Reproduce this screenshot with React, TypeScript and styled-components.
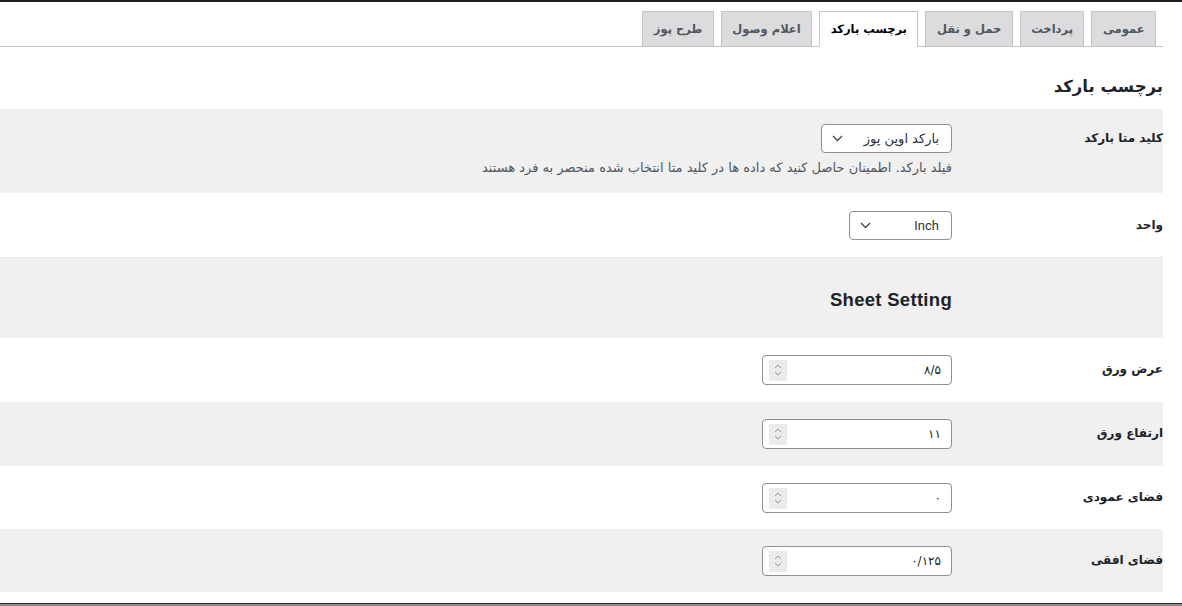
import React from "react";
import styled, { createGlobalStyle } from "styled-components";

const Global = createGlobalStyle`
  html, body { margin: 0; padding: 0; background: #ffffff; }
  body { font-family: "DejaVu Sans", "Noto Sans", sans-serif; color: #1d2327; }
  * { box-sizing: border-box; }
`;

const Page = styled.div`
  direction: rtl;
  width: 1182px;
  height: 606px;
  display: flex;
  flex-direction: column;
  overflow: hidden;
`;

const TopBar = styled.div`
  height: 2px;
  background: #1d1d1d;
  flex: none;
`;

const Content = styled.div`
  margin-right: 19px;
  display: flex;
  flex-direction: column;
  flex: 1;
`;

const TabBar = styled.nav`
  display: flex;
  gap: 7px;
  padding-top: 9px;
  padding-right: 7px;
  border-bottom: 1px solid #c3c4c7;
  height: 45px;
  align-items: flex-end;
`;

const Tab = styled.div<{ $active?: boolean }>`
  height: 36px;
  margin-bottom: -1px;
  padding: 0 10.5px;
  display: flex;
  align-items: center;
  font-size: 11.5px;
  font-weight: 700;
  color: ${(p) => (p.$active ? "#000" : "#50575e")};
  background: ${(p) => (p.$active ? "#ffffff" : "#dcdcde")};
  border: 1px solid #c3c4c7;
  border-bottom-color: ${(p) => (p.$active ? "#ffffff" : "#c3c4c7")};
  white-space: nowrap;
`;

const Title = styled.h2`
  margin: 0;
  height: 62px;
  display: flex;
  align-items: center;
  padding-top: 16px;
  font-size: 16.5px;
  font-weight: 700;
  color: #1d2327;
`;

const Row = styled.div<{ $shade?: boolean; $top?: number; $bottom?: number }>`
  display: grid;
  grid-template-columns: 211px 1fr;
  align-items: start;
  background: ${(p) => (p.$shade ? "#f0f0f0" : "#ffffff")};
  padding: ${(p) => p.$top ?? 17}px 0 ${(p) => p.$bottom ?? 17}px;
`;

const Label = styled.div`
  font-size: 12px;
  font-weight: 700;
  color: #1d2327;
  line-height: 28px;
  white-space: nowrap;
`;

const Cell = styled.div`
  display: flex;
  flex-direction: column;
  align-items: flex-start;
`;

const Select = styled.div<{ $w: number }>`
  width: ${(p) => p.$w}px;
  height: 29px;
  border: 1px solid #8c8f94;
  border-radius: 4px;
  background: #fff;
  display: flex;
  align-items: center;
  justify-content: space-between;
  padding: 0 12px 0 10px;
  font-size: 13px;
  color: #2c3338;
`;

const LatinText = styled.span`
  font-family: "Roboto", "Liberation Sans", sans-serif;
  font-size: 13px;
`;

const Desc = styled.p`
  margin: 5px 0 0;
  font-size: 13px;
  line-height: 20px;
  color: #50575e;
  white-space: nowrap;
`;

const Section = styled.div`
  display: grid;
  grid-template-columns: 211px 1fr;
  background: #f0f0f0;
  border-top: 1px solid #e8e8e8;
  height: 81px;
  align-items: center;
`;

const SectionTitle = styled.h3`
  grid-column: 2;
  margin: 4px 0 0;
  font-family: "Liberation Sans", "Roboto", sans-serif;
  font-size: 18.5px;
  font-weight: 700;
  color: #1d2327;
  letter-spacing: 0.3px;
`;

const NumberBox = styled.div`
  width: 190px;
  height: 30px;
  border: 1px solid #8c8f94;
  border-radius: 4px;
  background: #fff;
  display: flex;
  align-items: center;
  justify-content: space-between;
  padding: 0 10px 0 6px;
  font-size: 12px;
  color: #1d2327;
`;

const Spinner = styled.span`
  width: 18px;
  height: 21px;
  background: #ebebeb;
  display: flex;
  align-items: center;
  justify-content: center;
`;

const BottomLine = styled.div`
  height: 3px;
  border-top: 1px solid #2a2a2a;
  background: #8a8a8a;
  flex: none;
`;

const Chevron = () => (
  <svg width="11" height="7" viewBox="0 0 11 7" fill="none">
    <path d="M1 1l4.5 4.5L10 1" stroke="#3c434a" strokeWidth="1.3" />
  </svg>
);

const Spin = () => (
  <Spinner>
    <svg width="10" height="16" viewBox="0 0 10 16" fill="none">
      <path d="M2 6l3-3 3 3" stroke="#9a9a9a" strokeWidth="1" />
      <path d="M2 10l3 3 3-3" stroke="#9a9a9a" strokeWidth="1" />
    </svg>
  </Spinner>
);

const tabs = ["عمومی", "پرداخت", "حمل و نقل", "برچسب بارکد", "اعلام وصول", "طرح پوز"];

const numbers: { label: string; value: string; shade: boolean; bottom: number }[] = [
  { label: "عرض ورق", value: "۸/۵", shade: false, bottom: 17 },
  { label: "ارتفاع ورق", value: "۱۱", shade: true, bottom: 17 },
  { label: "فضای عمودی", value: "۰", shade: false, bottom: 16 },
  { label: "فضای افقی", value: "۰/۱۲۵", shade: true, bottom: 16 },
];

export default function App() {
  return (
    <>
      <Global />
      <Page>
        <TopBar />
        <Content>
          <TabBar>
            {tabs.map((t) => (
              <Tab key={t} $active={t === "برچسب بارکد"}>
                {t}
              </Tab>
            ))}
          </TabBar>
          <Title>برچسب بارکد</Title>
          <Row $shade $top={15} $bottom={15}>
            <Label>کلید متا بارکد</Label>
            <Cell>
              <Select $w={131}>
                <span>بارکد اوپن پوز</span>
                <Chevron />
              </Select>
              <Desc>فیلد بارکد. اطمینان حاصل کنید که داده ها در کلید متا انتخاب شده منحصر به فرد هستند</Desc>
            </Cell>
          </Row>
          <Row $top={18} $bottom={17}>
            <Label>واحد</Label>
            <Cell>
              <Select $w={103}>
                <LatinText>Inch</LatinText>
                <Chevron />
              </Select>
            </Cell>
          </Row>
          <Section>
            <SectionTitle>Sheet Setting</SectionTitle>
          </Section>
          {numbers.map((n) => (
            <Row key={n.label} $shade={n.shade} $top={17} $bottom={n.bottom}>
              <Label>{n.label}</Label>
              <Cell>
                <NumberBox>
                  <span>{n.value}</span>
                  <Spin />
                </NumberBox>
              </Cell>
            </Row>
          ))}
        </Content>
        <BottomLine />
      </Page>
    </>
  );
}
